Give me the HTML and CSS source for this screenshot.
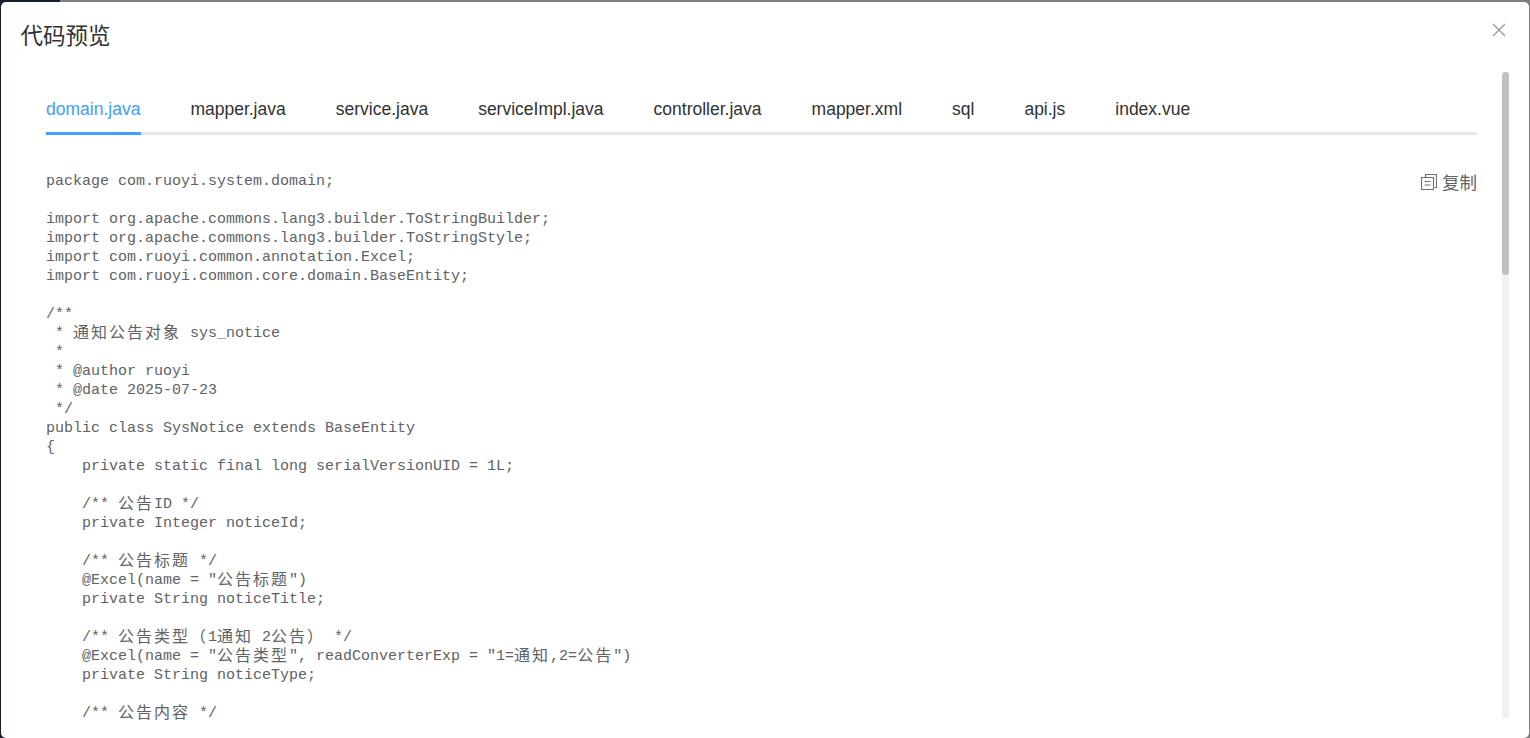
FILE: index.html
```html
<!DOCTYPE html>
<html lang="zh">
<head>
<meta charset="utf-8">
<title>代码预览</title>
<link rel="stylesheet" href="styles.css">
</head>
<body>
<div class="page">
  <div class="backdrop-side"></div>
  <section class="dialog">
    <header class="dialog-header">
      <h2 class="dialog-title">代码预览</h2>
      <button class="close" aria-label="关闭">
        <svg viewBox="0 0 14 14" width="14" height="14"><path d="M1 1L13 13M13 1L1 13" fill="none" stroke="#909399" stroke-width="1.1"/></svg>
      </button>
    </header>
    <div class="dialog-body">
      <nav class="tabs">
        <a class="tab active">domain.java</a>
        <a class="tab">mapper.java</a>
        <a class="tab">service.java</a>
        <a class="tab">serviceImpl.java</a>
        <a class="tab">controller.java</a>
        <a class="tab">mapper.xml</a>
        <a class="tab">sql</a>
        <a class="tab">api.js</a>
        <a class="tab">index.vue</a>
      </nav>
      <div class="pane">
        <a class="copy">
          <svg viewBox="0 0 16 16" width="16" height="16"><path d="M4.500 3.500V0.500H15.500V13.500H13.500M0.500 3.500H12.500V15.500H0.500ZM3.500 7.500H9.500M3.500 11H9.500" fill="none" stroke="#707070" stroke-width="1.100"/></svg>
          <span>复制</span>
        </a>
<pre class="code">package com.ruoyi.system.domain;

import org.apache.commons.lang3.builder.ToStringBuilder;
import org.apache.commons.lang3.builder.ToStringStyle;
import com.ruoyi.common.annotation.Excel;
import com.ruoyi.common.core.domain.BaseEntity;

/**
 * <i>通知公告对象</i> sys_notice
 *
 * @author ruoyi
 * @date 2025-07-23
 */
public class SysNotice extends BaseEntity
{
    private static final long serialVersionUID = 1L;

    /** <i>公告</i>ID */
    private Integer noticeId;

    /** <i>公告标题</i> */
    @Excel(name = "<i>公告标题</i>")
    private String noticeTitle;

    /** <i>公告类型（</i>1<i>通知</i> 2<i>公告）</i> */
    @Excel(name = "<i>公告类型</i>", readConverterExp = "1=<i>通知</i>,2=<i>公告</i>")
    private String noticeType;

    /** <i>公告内容</i> */</pre>
      </div>
    </div>
    <div class="scrollbar"><div class="scrollbar-thumb"></div></div>
  </section>
</div>
</body>
</html>
```
FILE: styles.css
```css
* { box-sizing: border-box; }
html, body { margin: 0; height: 100%; overflow: hidden; }
body { font-family: "Liberation Sans", "Noto Sans CJK SC", sans-serif; }

.page {
  position: relative;
  width: 1530px;
  height: 738px;
  overflow: hidden;
  background: #7f7f7f;
  padding: 2px 1px 0;
}
.backdrop-side {
  position: absolute;
  left: 0;
  top: 0;
  bottom: 0;
  width: 60px;
  background: #17202c;
}
.dialog {
  position: relative;
  display: flex;
  flex-direction: column;
  height: 736px;
  background: #fff;
  border-radius: 5px;
}
.dialog-header {
  display: flex;
  justify-content: space-between;
  align-items: flex-start;
  height: 70px;
  flex: none;
  padding: 21px 23px 0 19.500px;
}
.dialog-title {
  margin: -2px 0 0;
  font: 400 22.500px/27px "Noto Sans CJK SC", sans-serif;
  color: #303133;
}
.close {
  border: 0;
  padding: 0;
  background: none;
  line-height: 0;
}
.dialog-body {
  flex: 1;
  min-height: 0;
  margin: 0 20px 20px;
  padding: 12px 32px 0 25px;
}
.scrollbar {
  position: absolute;
  top: 70px;
  right: 20px;
  bottom: 20px;
  width: 7px;
  background: #f1f1f1;
}
.scrollbar-thumb {
  height: 203px;
  background: #c1c1c1;
  border-radius: 4px;
}

.tabs {
  display: flex;
  height: 51px;
  border-bottom: 3px solid #e4e7ed;
}
.tab {
  position: relative;
  padding: 0 25px;
  height: 51px;
  font-size: 17.500px;
  line-height: 50px;
  color: #303133;
}
.tab:first-child { padding-left: 0; }
.tab.active { color: #409eff; }
.tab.active::after {
  content: "";
  position: absolute;
  left: 0;
  right: 24px;
  bottom: 0;
  height: 3px;
  background: #409eff;
}
.pane {
  position: relative;
  padding-top: 37px;
}
.copy {
  position: absolute;
  top: 35px;
  right: 0;
  display: flex;
  align-items: center;
  gap: 5px;
  height: 24px;
  font: 17.500px/24px "Noto Sans CJK SC", sans-serif;
  color: #606266;
}
.code {
  margin: 0;
  font: 15px/19px "Liberation Mono", "Noto Sans CJK SC", monospace;
  color: #606266;
}
.code i {
  font: 16px/0 "Noto Sans CJK SC", sans-serif;
  letter-spacing: 2px;
  position: relative;
  top: 1px;
}
```
